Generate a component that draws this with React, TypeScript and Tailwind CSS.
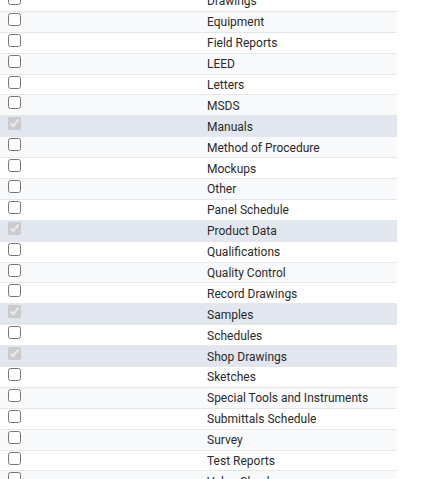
import React from "react";

const rows: { name: string; checked?: boolean }[] = [
  { name: "Drawings" },
  { name: "Equipment" },
  { name: "Field Reports" },
  { name: "LEED" },
  { name: "Letters" },
  { name: "MSDS" },
  { name: "Manuals", checked: true },
  { name: "Method of Procedure" },
  { name: "Mockups" },
  { name: "Other" },
  { name: "Panel Schedule" },
  { name: "Product Data", checked: true },
  { name: "Qualifications" },
  { name: "Quality Control" },
  { name: "Record Drawings" },
  { name: "Samples", checked: true },
  { name: "Schedules" },
  { name: "Shop Drawings", checked: true },
  { name: "Sketches" },
  { name: "Special Tools and Instruments" },
  { name: "Submittals Schedule" },
  { name: "Survey" },
  { name: "Test Reports" },
  { name: "Value Check" },
];

export default function App() {
  return (
    <div className="h-[479px] w-[445px] overflow-hidden bg-white">
      <div
        className="-mt-[10px] w-[397px] text-[12px] text-[#2a2a2a]"
        style={{ fontFamily: "Roboto, 'Liberation Sans', sans-serif" }}
      >
        {rows.map((r, i) => (
          <div
            key={r.name}
            className={
              "flex h-[20.9px] border-t border-[#e4e6ea] " +
              (r.checked ? "bg-[#e2e7ef]" : i % 2 === 1 ? "bg-[#f8f9fb]" : "bg-white")
            }
          >
            <div className="flex w-[207px] items-start pl-[4px] pt-[1px]">
              <input
                type="checkbox"
                checked={!!r.checked}
                disabled={!!r.checked}
                readOnly
                className="m-0 ml-[4px] h-[13px] w-[13px]"
              />
            </div>
            <div className="flex items-center pt-[1px] leading-none">{r.name}</div>
          </div>
        ))}
      </div>
    </div>
  );
}
